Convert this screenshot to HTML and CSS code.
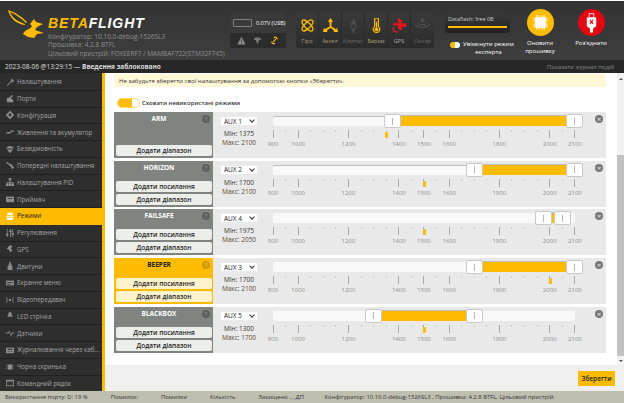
FILE: index.html
```html
<!DOCTYPE html>
<html lang="uk">
<head>
    <meta charset="UTF-8">
    <title>Betaflight Configurator</title>
    <link rel="stylesheet" href="styles.css">
</head>
<body>
<div id="app">
    <header id="top">
        <svg class="bird" viewBox="0 0 40 34" width="40" height="34">
            <path d="M0 1 C7 3 14 8 19 13 L18 14 C13 9 7 5 2 3 C4 8 8 12 17 15 L17 16 C8 15 2 9 0 1Z" fill="#ffbb00"/>
            <path d="M15 25 C17 20 22 21 24 17 L22 15 L26 10 L28 13 L35 15 L29 18 L27 21 L36 24 L29 25 L26 29 L20 28 Z" fill="#ffbb00"/>
        </svg>
        <div class="brand">
            <div class="logo"><b>BETA</b>FLIGHT</div>
            <div class="info">Конфігуратор: 10.10.0-debug-1526SL3</div>
            <div class="info">Прошивка: 4.2.8 BTFL</div>
            <div class="info">Цільовий пристрій: FOXEERF7 / MAMBAF722(STM32F745)</div>
        </div>
        <div class="power">
            <div class="power-top">
                <span class="battery"></span>
                <span>0.07V (USB)</span>
            </div>
            <div class="power-icons">
                <svg viewBox="0 0 10 10" width="9" height="9"><path d="M5 .5 L9.5 9.5 H.5Z" fill="#8a8a8a"/><path d="M4.6 3.5h.8v3h-.8zM4.6 7.3h.8v1h-.8z" fill="#333"/></svg>
                <svg viewBox="0 0 10 10" width="9" height="9"><path d="M.5 4 C2 .5 8 .5 9.5 4 L7 4.5 L5 9.5 L3 4.5Z" fill="#777"/></svg>
                <svg viewBox="0 0 10 10" width="9" height="9"><path d="M1.5 6.5 L3 8 C4 9 5 8.5 5.5 8 M8.5 3.5 L7 2 C6 1 5 1.500 4.500 2 M3.500 6.500 L6.500 3.500" fill="none" stroke="#ffbb00" stroke-width="1.400"/></svg>
            </div>
        </div>
        <div class="sensors">
            <div class="sensor on">
                <svg viewBox="0 0 16 16" width="15" height="15"><g fill="none" stroke="#ffbb00" stroke-width="1.300"><ellipse cx="8" cy="8" rx="7.500" ry="3" transform="rotate(45 8 8)"/><ellipse cx="8" cy="8" rx="7.500" ry="3" transform="rotate(-45 8 8)"/></g></svg>
                <span>Гіро</span>
            </div>
            <div class="sensor on">
                <svg viewBox="0 0 16 16" width="15" height="15"><path d="M7 4H5L8 0l3 4H9v5l5 3 1-2 1 5-5 0 1-1.500-4-3-4 3 1 1.500-5 0 1-5 1 2 5-3z" fill="#ffbb00"/></svg>
                <span>Аксел</span>
            </div>
            <div class="sensor">
                <svg viewBox="0 0 16 16" width="15" height="15"><path d="M8 0 L11 7 H5Z" fill="#4f4f4f"/><path d="M5.500 8 L8 16 L10.500 8" fill="none" stroke="#4f4f4f" stroke-width="1.200"/></svg>
                <span>Компас</span>
            </div>
            <div class="sensor on">
                <svg viewBox="0 0 16 16" width="15" height="15"><path d="M6 1.500 a2 1.500 0 0 1 4 0 V9 a3.500 3.500 0 1 1-4 0Z" fill="none" stroke="#ffbb00" stroke-width="1.300"/><path d="M7.300 4h1.400v6.500h-1.400z" fill="#ffbb00"/><circle cx="8" cy="12" r="2" fill="#ffbb00"/></svg>
                <span>Баром</span>
            </div>
            <div class="sensor bad">
                <svg viewBox="0 0 16 16" width="15" height="15"><path d="M7 0l4 3-1 2 2 1 2-1 2 3-3 2-2-1-1 1 1 2-2 1-3-2 1-2-2-2-3 2-1-3 3-1 2 1 1-1-1-2z" fill="#e8131b"/><path d="M1 10c0 3 2 5 5 5" fill="none" stroke="#e8131b" stroke-width="1.500"/></svg>
                <span>GPS</span>
            </div>
            <div class="sensor">
                <svg viewBox="0 0 16 16" width="15" height="15"><g fill="none" stroke="#555" stroke-width="1.100"><path d="M0 6c2 5 14 5 16 0"/><path d="M3 5c2 3 8 3 10 0"/><path d="M5.500 3c1 1.500 4 1.500 5 0"/></g><circle cx="8" cy="1.500" r="1.300" fill="#555"/></svg>
                <span>Сонар</span>
            </div>
        </div>
        <div class="flash-col">
            <div class="flash">
                <div>Dataflash: free 0B</div>
                <div class="flash-bar"></div>
            </div>
            <div class="expert">
                <span class="mini-toggle"></span>
                <span>Увімкнути режим<br>експерта</span>
            </div>
        </div>
        <div class="round-btn">
            <span class="circle yellow">
                <svg viewBox="0 0 16 16" width="17" height="17"><rect x="3" y="3" width="10" height="10" fill="#fff"/><path d="M4.500 1v14M6.500 1v14M9.500 1v14M11.500 1v14M1 4.500h14M1 6.500h14M1 9.500h14M1 11.500h14" stroke="#fff" stroke-width=".8"/></svg>
            </span>
            <span>Оновити прошивку</span>
        </div>
        <div class="round-btn">
            <span class="circle red">
                <svg viewBox="0 0 14 24" width="11" height="22"><path d="M4 0h6v5H4z" fill="none" stroke="#fff"/><path d="M1 5h12v11l-4 3v5H5v-5l-4-3z" fill="#fff"/><path d="M5 8l4 5M9 8l-4 5" stroke="#e30613" stroke-width="1.500"/></svg>
            </span>
            <span>Роз'єднати</span>
        </div>
    </header>

    <div id="log">
        <span>2023-08-06 @13:29:15 — <b>Введення заблоковано</b></span>
        <span class="log-link">Показати журнал подій</span>
    </div>

    <div id="middle">
        <nav id="menu">
            <a><svg viewBox="0 0 10 10"><path d="M1 9l5-5a2.500 2.500 0 0 1 3-3L7.500 2.500l1 1L10 2a2.500 2.500 0 0 1-3.500 3L2 10z"/></svg>Налаштування</a>
            <a><svg viewBox="0 0 10 10"><path d="M1 4l3-1 4-3 1 1-3 3 3 2v3H1z"/></svg>Порти</a>
            <a><svg viewBox="0 0 10 10"><circle cx="5" cy="5" r="2.800" fill="none" stroke="#8d8d8d" stroke-width="2"/><path d="M4 0h2v2H4zM4 8h2v2H4zM0 4h2v2H0zM8 4h2v2H8z"/></svg>Конфігурація</a>
            <a><svg viewBox="0 0 10 10"><path d="M0 6l3-1 2 0 2-2 3 0v1L7 5 5 7 0 7z"/></svg>Живлення та акумулятор</a>
            <a><svg viewBox="0 0 10 10"><path d="M0 4.500C2 0 8 0 10 4.500zM1 5.500h8L5 10z"/></svg>Безвідмовність</a>
            <a><svg viewBox="0 0 10 10"><path d="M0 1l2-1 3 3-1 1zM4 3l2-1 4 5-2 2z"/></svg>Попередні налаштування</a>
            <a><svg viewBox="0 0 10 10"><path d="M3.500 0h3v3h-3zM4.500 3h1v2H9v2H8V6H5.500v1h-1V6H2v1H1V5h3.500zM0 7h3v3H0zM3.500 7h3v3h-3zM7 7h3v3H7z"/></svg>Налаштування PID</a>
            <a><svg viewBox="0 0 10 10"><path d="M0 2h10v7H0z"/><path d="M2 4h6v1H2z" fill="#333"/></svg>Приймач</a>
            <a class="active"><svg viewBox="0 0 10 10"><path d="M2 1h6l1 3H1zM0 5h10v1H0zM1 7h8v3H1z"/></svg>Режими</a>
            <a><svg viewBox="0 0 10 10"><path d="M1 0h1v10H1zM5 0h1v10H5zM8 0h1v10H8zM0 6h3v2H0zM4 2h3v2H4zM7 5h3v2H7z"/></svg>Регулювання</a>
            <a><svg viewBox="0 0 10 10"><path d="M3 2l3-2 2 2-2 2 2 3-3 2-1-3-3-1z"/></svg>GPS</a>
            <a><svg viewBox="0 0 10 10"><path d="M4 0h2v3h1v2h1v5H2V5h1V3h1z"/></svg>Двигуни</a>
            <a><svg viewBox="0 0 10 10"><path d="M0 2h10v6H0z"/><path d="M1 4h8v1H1zM1 6h5v1H1z" fill="#333"/></svg>Екранне меню</a>
            <a><svg viewBox="0 0 10 10"><circle cx="5" cy="5" r="1.500"/><path d="M2.500 2C1 4 1 6 2.500 8M7.500 2C9 4 9 6 7.500 8M1 1C-.5 3.500-.5 6.500 1 9M9 1c1.500 2.500 1.500 5.500 0 8" fill="none" stroke="#8d8d8d" stroke-width=".7"/></svg>Відеопередавач</a>
            <a><svg viewBox="0 0 10 10"><path d="M3 4V2a2 2 0 0 1 4 0v2l1 0v2H2V4z"/></svg>LED стрічка</a>
            <a><svg viewBox="0 0 10 10"><path d="M0 4.500h3L4.500 1.500 6 8 7 4.500h3v1H7.700L6 10 4.200 4 3.500 5.500H0z"/></svg>Датчики</a>
            <a><svg viewBox="0 0 10 10"><path d="M0 2h10v7H0z"/><path d="M2 3.500h6v1.500H2zM2 6.500h2v1H2zM6 6.500h2v1H6z" fill="#333"/></svg>Журналювання через каб...</a>
            <a><svg viewBox="0 0 10 10"><path d="M2 2h6v6H2zM0 3h1v1H0zM0 6h1v1H0zM9 3h1v1H9zM9 6h1v1H9z"/></svg>Чорна скринька</a>
            <a><svg viewBox="0 0 10 10"><path d="M0 1h10v8H0z"/><path d="M1 3h8v5H1z" fill="#333"/></svg>Командний рядок</a>
        </nav>
        <div id="right">
            <div id="tab">
                <main id="content">
                    <div class="note">Не забудьте зберегти свої налаштування за допомогою кнопки «Зберегти».</div>
                    <div class="hide-unused">
                        <span class="toggle"></span>
                        <span>Сховати невикористані режими</span>
                    </div>
                    <div id="modes"></div>
                </main>
                <div class="scrollbar">
                    <span class="arrow up"></span>
                    <span class="thumb"></span>
                    <span class="arrow down"></span>
                </div>
            </div>
            <div id="toolbar"><a class="save">Зберегти</a></div>
        </div>
    </div>

    <footer id="status">
        <div class="status-left">
            <span>Використання порту: D: 19 %</span>
            <span>Помилок:</span>
            <span>Помилки</span>
            <span>Кількість</span>
            <span>Захищено ... ДП</span>
        </div>
        <div class="status-right">Конфігуратор: 10.10.0-debug-1526SL3 , Прошивка: 4.2.8 BTFL, Цільовий пристрій.</div>
    </footer>
</div>
<script src="script.js"></script>
</body>
</html>
```

FILE: styles.css
```css
body {
    margin: 0;
    background-color: #fff;
    font-family: "Open Sans", sans-serif;
    font-size: 7px;
    color: #333;
}

#app {
    width: 624px;
    height: 403px;
    overflow: hidden;
    display: flex;
    flex-direction: column;
}

/* header */
#top {
    height: 59px;
    margin-top: 1px;
    flex: none;
    display: flex;
    background: linear-gradient(#333, #3e3e3e);
    color: #fff;
}

.bird {
    margin: 8px 0 0 8px;
    flex: none;
}

.brand {
    width: 182px;
    flex: none;
    color: #8f8f8f;
    white-space: nowrap;
}

.logo {
    margin-top: 15px;
    margin-bottom: 2.500px;
    font-family: "Liberation Sans", sans-serif;
    font-size: 14px;
    line-height: 14px;
    font-weight: bold;
    font-style: italic;
    letter-spacing: .9px;
    color: #fff;
}

.logo b {
    color: #ffbb00;
}

.info {
    font-size: 6.500px;
    line-height: 8.500px;
}

.power {
    width: 56px;
    height: 35px;
    margin-top: 12px;
    flex: none;
    border-radius: 3px;
    overflow: hidden;
    background-color: #2c2c2c;
}

.power-top {
    height: 20px;
    display: flex;
    align-items: center;
    gap: 4px;
    padding-left: 3px;
    font-size: 5.500px;
    white-space: nowrap;
    background-color: #3a3a3a;
}

.battery {
    width: 17px;
    height: 6px;
    flex: none;
    border: 1px solid #808080;
    border-radius: 1px;
}

.power-icons {
    height: 15px;
    display: flex;
    align-items: center;
    justify-content: space-around;
    padding: 0 3px;
}

.sensors {
    height: 35px;
    margin: 12px 0 0 10px;
    flex: none;
    display: flex;
    border-radius: 3px;
    overflow: hidden;
    background: linear-gradient(#3a3a3a, #2b2b2b);
}

.sensor {
    width: 23px;
    display: flex;
    flex-direction: column;
    align-items: center;
    gap: 3px;
    padding-top: 5px;
    box-sizing: border-box;
    border-right: 1px solid #2a2a2a;
    font-size: 5.500px;
    line-height: 10px;
    color: #6a6a6a;
    white-space: nowrap;
}

.sensor:last-child {
    border-right: none;
}

.sensor.on {
    color: #b0a070;
}

.sensor.bad {
    color: #aaa;
}

.flash-col {
    width: 65px;
    margin: 12px 0 0 11px;
    flex: none;
}

.flash {
    height: 20px;
    padding: 2px 3px;
    box-sizing: border-box;
    border-radius: 3px;
    background: linear-gradient(#3a3a3a, #222);
    font-size: 5.500px;
    line-height: 9px;
    color: #ccc;
}

.flash-bar {
    height: 2px;
    margin-top: 2px;
    background-color: #ffbb00;
}

.expert {
    display: flex;
    align-items: center;
    gap: 3px;
    margin-top: 8px;
    padding-left: 5px;
    font-size: 6px;
    line-height: 7.500px;
    text-align: center;
    white-space: nowrap;
}

.mini-toggle {
    width: 10px;
    height: 6px;
    margin-top: -7px;
    flex: none;
    border-radius: 3px;
    background: linear-gradient(90deg, #ffbb00 50%, #fff 50%);
}

.round-btn {
    width: 42px;
    margin: 8px 0 0 9px;
    flex: none;
    display: flex;
    flex-direction: column;
    align-items: center;
    font-size: 6px;
    line-height: 8px;
    text-align: center;
}

.circle {
    width: 27px;
    height: 27px;
    margin-bottom: 3px;
    display: flex;
    align-items: center;
    justify-content: center;
    border-radius: 50%;
}

.yellow {
    background-color: #ffbb00;
}

.red {
    background-color: #e30613;
}

/* log line */
#log {
    height: 13px;
    flex: none;
    display: flex;
    align-items: center;
    justify-content: space-between;
    padding: 0 10px 0 5px;
    background-color: #272727;
    color: #ddd;
    font-size: 6.500px;
}

.log-link {
    color: #8a8a8a;
    font-size: 5.900px;
}

#middle {
    flex: 1;
    min-height: 0;
    display: flex;
}

/* menu */
#menu {
    width: 102px;
    flex: none;
    padding-top: 1px;
    border-right: 3px solid #ffbb00;
    background-color: #2e2e2e;
    overflow: hidden;
}

#menu a {
    height: 15.750px;
    display: flex;
    align-items: center;
    gap: 3px;
    padding-left: 6px;
    border-bottom: 1px solid #202020;
    color: #a5a5a5;
    font-size: 6.200px;
    white-space: nowrap;
}

#menu a svg {
    width: 8px;
    height: 8px;
    flex: none;
    fill: #8d8d8d;
}

#menu a.active {
    background-color: #ffbb00;
    color: #222;
    border-bottom-color: #ffbb00;
}

#menu a.active svg {
    fill: #fff;
}

/* tab */
#right {
    flex: 1;
    min-width: 0;
    display: flex;
    flex-direction: column;
}

#tab {
    flex: 1;
    min-height: 0;
    display: flex;
}

#content {
    flex: 1;
    min-width: 0;
    padding: 1px 11px 0 9px;
    overflow: hidden;
}

.note {
    height: 13px;
    padding-left: 5px;
    background-color: #fff7d6;
    color: #333;
    font-size: 6.100px;
    line-height: 13px;
    white-space: nowrap;
}

.hide-unused {
    display: flex;
    align-items: center;
    gap: 2px;
    height: 10px;
    margin: 11px 0 4px 3px;
    font-weight: 600;
    font-size: 6px;
}

.toggle {
    width: 23px;
    height: 10px;
    flex: none;
    box-sizing: border-box;
    border: 1px solid #ffd766;
    border-radius: 5px;
    background: linear-gradient(90deg, #ffbb00 68%, #fff 68%);
}

.mode {
    height: 46px;
    margin-bottom: 2.700px;
    display: flex;
    background-color: #e9e9e9;
}

.mode-panel {
    position: relative;
    width: 99px;
    flex: none;
    display: flex;
    flex-direction: column;
    gap: 2px;
    padding: 0 1px 2px 2px;
    box-sizing: border-box;
    background-color: #7f8480;
}

.mode-title {
    margin-top: 3px;
    margin-bottom: auto;
    padding-right: 10px;
    color: #fff;
    font-weight: bold;
    font-size: 6.500px;
    line-height: 8px;
    text-align: center;
}

.help {
    position: absolute;
    top: 3px;
    right: 3px;
    width: 8px;
    height: 8px;
    border-radius: 50%;
    background-color: #5f5f5f;
    color: #7f8480;
    font-size: 6px;
    font-weight: bold;
    line-height: 8px;
    text-align: center;
}

.mode-btn {
    height: 11px;
    border-radius: 2px;
    background-color: #eceeea;
    color: #222;
    font-size: 6.500px;
    font-weight: 600;
    line-height: 11px;
    text-align: center;
}

.mode.selected .mode-panel {
    background-color: #ffbb00;
}

.mode.selected .mode-title {
    color: #222;
}

.mode.selected .help {
    background-color: #d29a00;
    color: #ffbb00;
}

.mode.selected .mode-btn {
    background-color: #fff3cd;
}

.mode-aux {
    width: 36px;
    margin: 5px 0 0 8px;
    flex: none;
    font-size: 6.500px;
    line-height: 9px;
    text-align: center;
    white-space: nowrap;
}

.aux-select {
    height: 8px;
    margin-bottom: 4px;
    display: flex;
    align-items: center;
    justify-content: space-between;
    padding: 0 3px;
    background-color: #fff;
    color: #222;
    font-size: 6.500px;
}

.chevron {
    width: 3px;
    height: 3px;
    margin-top: -2px;
    border-right: 1px solid #333;
    border-bottom: 1px solid #333;
    transform: rotate(45deg);
}

.max-label {
    color: #5a4a3a;
}

.slider {
    position: relative;
    width: 302px;
    margin: 4px 0 0 16px;
    flex: none;
}

.track {
    height: 10px;
    display: flex;
    background-color: #f8f8f8;
    border-radius: 2px;
}

.track span {
    flex: none;
}

.track.outlined {
    box-shadow: inset 0 1px #bdbdbd;
}

.fill {
    background-color: #ffbb00;
    box-shadow: 0 -1px #bdbdbd;
}

.handle {
    width: 17px;
    height: 14px;
    margin-top: -2px;
    display: flex;
    align-items: center;
    justify-content: center;
    box-sizing: border-box;
    border: 1px solid #c8c8c8;
    border-radius: 2px;
    background-color: #fff;
}

.handle::after {
    content: "";
    width: 1px;
    height: 7px;
    background-color: #b5b5b5;
}

.pips {
    display: flex;
    justify-content: space-between;
    margin-top: 4px;
}

.pip {
    width: 0;
    display: flex;
    flex-direction: column;
    align-items: center;
    color: #8f8f8f;
    font-size: 6px;
    line-height: 8px;
}

.pip::before {
    content: "";
    width: 1px;
    height: 2px;
    margin: 0 0 8px;
    flex: none;
    background-color: #c9c9c9;
}

.pip.big::before {
    height: 8px;
    margin-bottom: 2px;
    background-color: #a8a8a8;
}

.pip.big {
    height: 18px;
}

.marker {
    position: absolute;
    top: 16px;
    width: 3px;
    height: 6px;
    margin-left: -1px;
    border-radius: 1px;
    background-color: #ffbb00;
}

.remove {
    width: 8px;
    height: 8px;
    margin: 3px 3px 0 auto;
    flex: none;
    border-radius: 50%;
    background-color: #777;
    color: #e9e9e9;
    font-size: 8px;
    line-height: 8px;
    text-align: center;
}

/* scrollbar */
.scrollbar {
    width: 7px;
    flex: none;
    display: flex;
    flex-direction: column;
    background-color: #f1f1f1;
}

.arrow {
    height: 0;
    margin: 5px auto 0;
    border-left: 2px solid transparent;
    border-right: 2px solid transparent;
}

.arrow.up {
    border-bottom: 2px solid #505050;
}

.arrow.down {
    margin: 4px auto 0;
    border-top: 2px solid #505050;
}

.thumb {
    height: 201px;
    margin-top: 75px;
    background-color: #c1c1c1;
}

/* bottom */
#toolbar {
    height: 26px;
    flex: none;
    display: flex;
    justify-content: flex-end;
    padding: 6px 9px 0 0;
    box-sizing: border-box;
    background-color: #efefef;
}

.save {
    width: 37px;
    height: 15px;
    background-color: #ffbb00;
    border-radius: 1px;
    color: #222;
    font-size: 6.500px;
    font-weight: 600;
    line-height: 15px;
    text-align: center;
}

#status {
    height: 12px;
    flex: none;
    display: flex;
    justify-content: space-between;
    padding: 0 69px 0 5px;
    background-color: #bfbfb0;
    color: #333;
    font-size: 5.900px;
    line-height: 12px;
    white-space: nowrap;
}

.status-left {
    width: 299px;
    display: flex;
    justify-content: space-between;
}
```

FILE: script.js
```js
var modes = [
    { name: "ARM", aux: 1, min: 1375, max: 2100, pos: 1350, links: false, outlined: true },
    { name: "HORIZON", aux: 2, min: 1700, max: 2100, pos: 1500, links: true, outlined: true },
    { name: "FAILSAFE", aux: 4, min: 1975, max: 2050, pos: 1500, links: true },
    { name: "BEEPER", aux: 3, min: 1700, max: 2100, pos: 2000, links: true, selected: true },
    { name: "BLACKBOX", aux: 5, min: 1300, max: 1700, pos: 1500, links: true }
];

var SCALE = 302 / 1200;
var HANDLE = 17;
var labels = [900, 1000, 1200, 1400, 1500, 1600, 1800, 2000, 2100];

function toPx(value) {
    return (value - 900) * SCALE;
}

function pipsHtml() {
    var html = "";
    for (var v = 900; v <= 2100; v += 50) {
        var big = labels.indexOf(v) >= 0;
        html += '<span class="pip' + (big ? " big" : "") + '">' + (big ? v : "") + "</span>";
    }
    return html;
}

var out = "";
modes.forEach(function (m) {
    var left = toPx(m.min) - HANDLE / 2;
    var fill = toPx(m.max) - toPx(m.min) - HANDLE;

    out += '<section class="mode' + (m.selected ? " selected" : "") + '">';
    out += '<div class="mode-panel"><div class="mode-title">' + m.name + "</div>";
    out += '<span class="help">?</span>';
    if (m.links) {
        out += '<div class="mode-btn">Додати посилання</div>';
    }
    out += '<div class="mode-btn">Додати діапазон</div></div>';

    out += '<div class="mode-aux"><div class="aux-select">AUX ' + m.aux + '<span class="chevron"></span></div>';
    out += "<div>Мін: " + m.min + '</div><div class="max-label">Макс: ' + m.max + "</div></div>";

    out += '<div class="slider"><div class="track' + (m.outlined ? " outlined" : "") + '">';
    out += '<span style="width:' + left + 'px"></span><span class="handle"></span>';
    out += '<span class="fill" style="width:' + fill + 'px"></span><span class="handle"></span></div>';
    out += '<div class="pips">' + pipsHtml() + "</div>";
    out += '<span class="marker" style="left:' + toPx(m.pos) + 'px"></span></div>';

    out += '<span class="remove">×</span></section>';
});
document.getElementById("modes").innerHTML = out;
```
